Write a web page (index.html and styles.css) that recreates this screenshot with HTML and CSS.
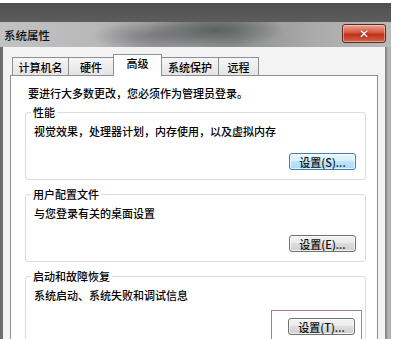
FILE: index.html
```html
<!DOCTYPE html>
<html>
<head>
<meta charset="utf-8">
<link rel="stylesheet" href="styles.css">
</head>
<body>
<div id="wrap">
	<div class="glassTop"></div>
	<div class="titleBar">
		<span class="title">系统属性</span>
		<button class="closeBtn">&#x2715;</button>
	</div>
	<div class="frame">
		<div class="dlgBody">
			<div class="tabs">
				<div class="tab t1">计算机名</div>
				<div class="tab t2">硬件</div>
				<div class="tab t3 selected">高级</div>
				<div class="tab t4">系统保护</div>
				<div class="tab t5">远程</div>
			</div>
			<div class="panel">
				<p class="intro">要进行大多数更改，您必须作为管理员登录。</p>
				<fieldset class="group">
					<legend>性能</legend>
					<p class="desc">视觉效果，处理器计划，内存使用，以及虚拟内存</p>
					<div class="btnRow"><button class="winBtn default">设置(S)...</button></div>
				</fieldset>
				<fieldset class="group">
					<legend>用户配置文件</legend>
					<p class="desc">与您登录有关的桌面设置</p>
					<div class="btnRow"><button class="winBtn">设置(E)...</button></div>
				</fieldset>
				<fieldset class="group">
					<legend>启动和故障恢复</legend>
					<p class="desc">系统启动、系统失败和调试信息</p>
					<div class="btnRow">
						<div class="mark"><button class="winBtn">设置(T)...</button></div>
					</div>
				</fieldset>
			</div>
		</div>
		<div class="rightEdge"></div>
	</div>
</div>
</body>
</html>
```

FILE: styles.css
```css
html, body {
	margin:0;
	padding:0;
	background:#fff;
	width:398px;
	height:339px;
	overflow:hidden;
	font-family:"Noto Sans CJK SC", "Liberation Sans", sans-serif;
	font-size:11px;
	font-weight:500;
	line-height:14px;
	color:#000;
}
#wrap {
	width:391px;
	height:336px;
	margin-top:3px;
	display:flex;
	flex-direction:column;
}
.glassTop {
	flex-shrink:0;
	height:19px;
	background:linear-gradient(#4f4f4f, #5d5d5d);
}
.titleBar {
	flex-shrink:0;
	height:25px;
	display:flex;
	justify-content:space-between;
	align-items:flex-start;
	padding:0 5px 0 4px;
	background:
		radial-gradient(ellipse 70px 18px at 215px 8px, rgba(70,80,75,0.75), rgba(70,80,75,0) 100%),
		radial-gradient(ellipse 60px 14px at 150px 14px, rgba(90,90,100,0.5), rgba(90,90,100,0) 100%),
		linear-gradient(to right, #c2c2c2 0%, #b8b8b8 25%, #9c9c9e 40%, #8e8f90 60%, #aaaaaa 80%, #b9b9b9 100%);
}
.title {
	margin-top:6px;
	font-size:11.5px;
	color:#111;
}
.closeBtn {
	margin-top:2px;
	width:44px;
	height:19px;
	padding:0;
	border:1px solid #5a2b22;
	border-radius:3px;
	background:linear-gradient(#e9a898 0%, #d6563e 45%, #c0301a 55%, #d3654d 100%);
	box-shadow:inset 0 0 0 1px rgba(255,220,210,0.5);
	color:#fff;
	font-size:12px;
	font-weight:bold;
	line-height:16px;
	text-shadow:0 0 2px #5a1a10;
	font-family:"DejaVu Sans", sans-serif;
}
.frame {
	flex:1;
	min-height:0;
	overflow:hidden;
	display:flex;
	border-left:3px solid #6c6c6c;
}
.dlgBody {
	flex:1;
	display:flex;
	flex-direction:column;
	padding:7px 7px 0 7px;
	background:#f3f3f3;
}
.rightEdge {
	width:6px;
	background:linear-gradient(to right, #7c7c7c 0, #9d9d9d 2px, #bdbdbd 4px, #a3a3a3 6px);
}
.tabs {
	flex-shrink:0;
	height:21px;
	display:flex;
	align-items:flex-end;
	padding-left:2px;
	position:relative;
	z-index:1;
}
.tab {
	height:17px;
	margin-left:-1px;
	border:1px solid #8d8f95;
	border-bottom:none;
	background:linear-gradient(#f6f6f6, #e4e4e4);
	text-align:center;
	line-height:18px;
	box-sizing:content-box;
}
.t1 { width:55px; margin-left:0; }
.t2 { width:44px; }
.t3 { width:47px; }
.t4 { width:56px; }
.t5 { width:39px; }
.tab.selected {
	height:21px;
	margin-bottom:-1px;
	background:#fff;
	line-height:17px;
}
.panel {
	flex:1 0 auto;
	border:1px solid #8d8f95;
	background:#fff;
	padding:10px 11px 0 14px;
}
.intro {
	margin:0 0 5px 3px;
}
.group {
	margin:0 0 7px 0;
	padding:0 9px 9px 5px;
	border:1px solid #d6dde3;
	border-radius:3px;
}
.group legend {
	padding:0 2px;
}
.desc {
	margin:5px 0 0 3px;
}
.btnRow {
	display:flex;
	justify-content:flex-end;
	margin-top:15px;
}
.winBtn {
	width:67px;
	height:17px;
	padding:0;
	border:1px solid #707070;
	border-radius:3px;
	background:linear-gradient(#f3f3f3 0%, #ebebeb 45%, #dddddd 50%, #cfcfcf 100%);
	box-shadow:inset 0 0 0 1px rgba(255,255,255,0.7);
	font-family:"Noto Sans CJK SC", sans-serif;
	font-size:11px;
	font-weight:500;
	line-height:14px;
	color:#111;
}
.winBtn.default {
	border-color:#3c7fb1;
	background:linear-gradient(#eaf6fd 0%, #d9f0fc 45%, #bee6fd 50%, #a7d9f5 100%);
}
.mark {
	margin:-7px -6px -30px 0;
	padding:7px 6px 30px 16px;
	border:1.5px solid #a97f7f;
}
```
